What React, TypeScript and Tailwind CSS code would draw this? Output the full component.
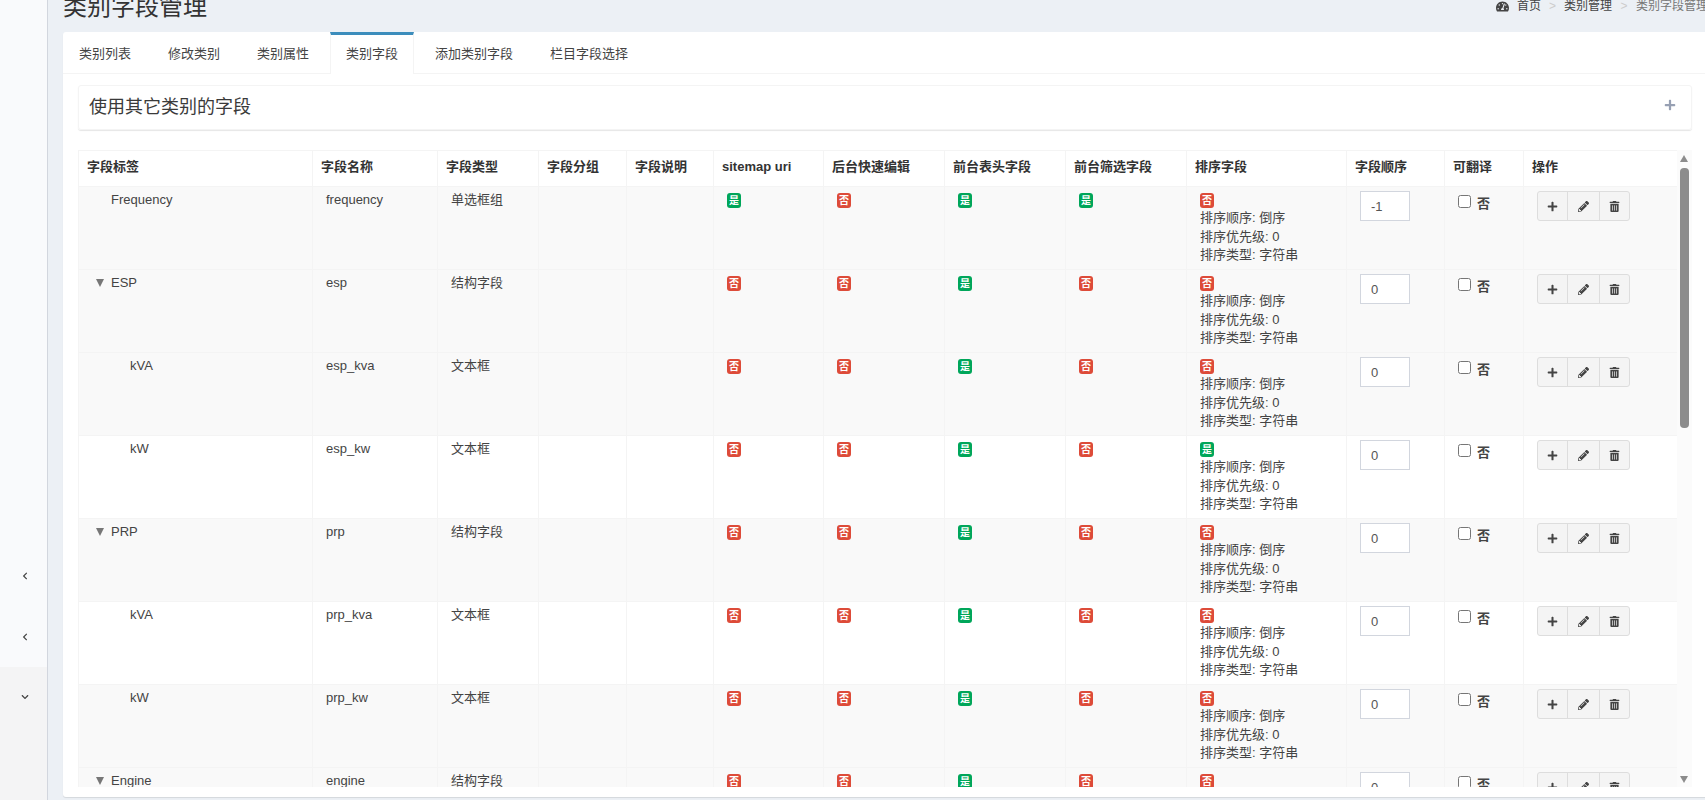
import { FaPlus, FaPencilAlt, FaTrashAlt, FaTachometerAlt, FaChevronLeft, FaChevronDown } from 'react-icons/fa';

const font = 'font-["Liberation_Sans","Noto_Sans_CJK_SC",sans-serif]';

const tabs = ['类别列表', '修改类别', '类别属性', '类别字段', '添加类别字段', '栏目字段选择'];
const headers = ['字段标签', '字段名称', '字段类型', '字段分组', '字段说明', 'sitemap uri', '后台快速编辑', '前台表头字段', '前台筛选字段', '排序字段', '字段顺序', '可翻译', '操作'];

type Row = {
  label: string;
  name: string;
  type: string;
  level: number;
  caret?: boolean;
  striped: boolean;
  sitemap: boolean;
  list: boolean;
  filter: boolean;
  sort: boolean;
  order: string;
};

const rows: Row[] = [
  { label: 'Frequency', name: 'frequency', type: '单选框组', level: 0, striped: true, sitemap: true, list: true, filter: true, sort: false, order: '-1' },
  { label: 'ESP', name: 'esp', type: '结构字段', level: 0, caret: true, striped: true, sitemap: false, list: true, filter: false, sort: false, order: '0' },
  { label: 'kVA', name: 'esp_kva', type: '文本框', level: 1, striped: true, sitemap: false, list: true, filter: false, sort: false, order: '0' },
  { label: 'kW', name: 'esp_kw', type: '文本框', level: 1, striped: false, sitemap: false, list: true, filter: false, sort: true, order: '0' },
  { label: 'PRP', name: 'prp', type: '结构字段', level: 0, caret: true, striped: true, sitemap: false, list: true, filter: false, sort: false, order: '0' },
  { label: 'kVA', name: 'prp_kva', type: '文本框', level: 1, striped: false, sitemap: false, list: true, filter: false, sort: false, order: '0' },
  { label: 'kW', name: 'prp_kw', type: '文本框', level: 1, striped: true, sitemap: false, list: true, filter: false, sort: false, order: '0' },
  { label: 'Engine', name: 'engine', type: '结构字段', level: 0, caret: true, striped: true, sitemap: false, list: true, filter: false, sort: false, order: '0' },
];

function YesNo({ on }: { on: boolean }) {
  return (
    <span className={`flex h-[15px] w-[14px] items-center justify-center rounded-[3px] text-[10px] leading-none font-bold text-white ${on ? 'bg-[#00a65a]' : 'bg-[#dd4b39]'}`}>
      {on ? '是' : '否'}
    </span>
  );
}

function FieldRow({ row }: { row: Row }) {
  const td = 'border border-[#f4f4f4] px-[13px] pt-[4px] align-top';
  return (
    <tr className={`h-[83px] ${row.striped ? 'bg-[#f9f9f9]' : 'bg-white'}`}>
      <td className={`${td} !pl-[17px]`}>
        <div className={`flex h-[18px] items-center ${row.level ? 'pl-[34px]' : 'pl-[15px]'} relative`}>
          {row.caret && <span className="absolute left-0 h-0 w-0 border-x-[4.5px] border-t-[8px] border-x-transparent border-t-[#777]" />}
          {row.label}
        </div>
      </td>
      <td className={td}><div className="h-[18px] leading-[18px]">{row.name}</div></td>
      <td className={td}><div className="h-[18px] leading-[18px]">{row.type}</div></td>
      <td className={td} />
      <td className={td} />
      <td className={`${td} !pt-[6px]`}><YesNo on={row.sitemap} /></td>
      <td className={`${td} !pt-[6px]`}><YesNo on={false} /></td>
      <td className={`${td} !pt-[6px]`}><YesNo on={row.list} /></td>
      <td className={`${td} !pt-[6px]`}><YesNo on={row.filter} /></td>
      <td className={`${td} !pt-[6px]`}>
        <YesNo on={row.sort} />
        <div className="pt-[1px] leading-[18.5px]">
          <div>排序顺序: 倒序</div>
          <div>排序优先级: 0</div>
          <div>排序类型: 字符串</div>
        </div>
      </td>
      <td className={`${td} !pt-[4px]`}>
        <input
          defaultValue={row.order}
          className="h-[30px] w-[50px] border border-[#d2d6de] bg-white px-[10px] text-[13px] text-[#555] outline-none"
        />
      </td>
      <td className={`${td} !pt-[7px]`}>
        <label className="flex items-center gap-[6px] font-bold">
          <input type="checkbox" className="m-0 -mt-[4px] h-[13px] w-[13px]" />
          否
        </label>
      </td>
      <td className={`${td} !pt-[4px]`}>
        <div className="flex h-[30px] w-[93px] overflow-hidden rounded-[3px] border border-[#ddd] bg-[#f4f4f4] text-[#444]">
          <span className="flex w-[30px] items-center justify-center border-r border-[#ddd]"><FaPlus size={11} /></span>
          <span className="flex w-[32px] items-center justify-center border-r border-[#ddd]"><FaPencilAlt size={11} /></span>
          <span className="flex flex-1 items-center justify-center"><FaTrashAlt size={11} /></span>
        </div>
      </td>
    </tr>
  );
}

export default function App() {
  return (
    <div className={`flex h-[800px] w-[1705px] overflow-hidden bg-[#ecf0f5] text-[13px] text-[#444] ${font}`}>
      <aside className="flex h-full w-[48px] shrink-0 flex-col border-r border-[#d2d6de] bg-[#f9fafc] pl-[2px] text-[#444]">
        <div className="flex-1" />
        <div className="flex h-[61px] items-center justify-center"><FaChevronLeft size={8} /></div>
        <div className="flex h-[61px] items-center justify-center"><FaChevronLeft size={8} /></div>
        <div className="-ml-[2px] flex h-[133px] items-start justify-center bg-[#f4f4f5] pt-[26px] pl-[2px]"><FaChevronDown size={8} /></div>
      </aside>

      <main className="min-w-0 flex-1 pl-[15px]">
        <header className="flex h-[32px] w-[1645px] items-start justify-between overflow-hidden">
          <h1 className="-mt-[6px] text-[24px] leading-[26px] text-[#333]">类别字段管理</h1>
          <nav className="flex h-[12px] items-center whitespace-nowrap text-[12px] leading-none text-[#444]">
            <FaTachometerAlt size={13} className="mr-[8px]" />
            首页
            <span className="mx-[8px] text-[#ccc]">&gt;</span>
            类别管理
            <span className="mx-[8.5px] text-[#ccc]">&gt;</span>
            <span className="text-[#777]">类别字段管理</span>
          </nav>
        </header>

        <section className="h-[765px] w-[1645px] rounded-[3px] bg-white shadow-[0_1px_1px_rgba(0,0,0,0.1)]">
          <ul className="flex h-[42px] gap-[5px] border-b border-[#f4f4f4]">
            {tabs.map((t) => (
              <li
                key={t}
                className={t === '类别字段'
                  ? 'flex h-[42px] items-center border-x border-t-[3px] border-[#f4f4f4] !border-t-[#3c8dbc] bg-white px-[15px] pb-[1px]'
                  : 'flex h-[42px] items-center px-[16px] pt-[2px]'}
              >
                {t}
              </li>
            ))}
          </ul>

          <div className="pt-[11px] pr-[16px] pl-[15px]">
            <div className="flex h-[45px] items-center justify-between rounded-[3px] border border-[#f4f4f4] pr-[15px] pl-[10px] shadow-[0_1px_1px_rgba(0,0,0,0.1)]">
              <h3 className="pb-[2px] text-[18px] leading-none text-[#3a3a3a]">使用其它类别的字段</h3>
              <FaPlus size={12} className="-mt-[5px] text-[#97a0b3]" />
            </div>

            <div className="mt-[20px] flex h-[637px]">
              <div className="w-[1599px] overflow-hidden">
                <table className="w-[1599px] table-fixed border-collapse">
                  <colgroup>
                    {[234, 125, 101, 88, 87, 110, 121, 121, 121, 160, 98, 79, 154].map((w, i) => (
                      <col key={i} style={{ width: w }} />
                    ))}
                  </colgroup>
                  <thead>
                    <tr className="h-[36px]">
                      {headers.map((h) => (
                        <th key={h} className="border border-[#f4f4f4] px-[8px] pb-[3px] text-left font-bold text-[#333]">{h}</th>
                      ))}
                    </tr>
                  </thead>
                  <tbody>
                    {rows.map((r) => <FieldRow key={r.name} row={r} />)}
                  </tbody>
                </table>
              </div>
              <div className="relative w-[15px] bg-[#fbfbfb]">
                <span className="absolute top-[5px] left-[3px] h-0 w-0 border-x-[4.5px] border-b-[7px] border-x-transparent border-b-[#8c8c8c]" />
                <span className="absolute top-[18px] left-[3px] h-[260px] w-[9px] rounded-[4px] bg-[#8c8c8c]" />
                <span className="absolute bottom-[4px] left-[3px] h-0 w-0 border-x-[4.5px] border-t-[7px] border-x-transparent border-t-[#8c8c8c]" />
              </div>
            </div>
          </div>
        </section>
      </main>
    </div>
  );
}
